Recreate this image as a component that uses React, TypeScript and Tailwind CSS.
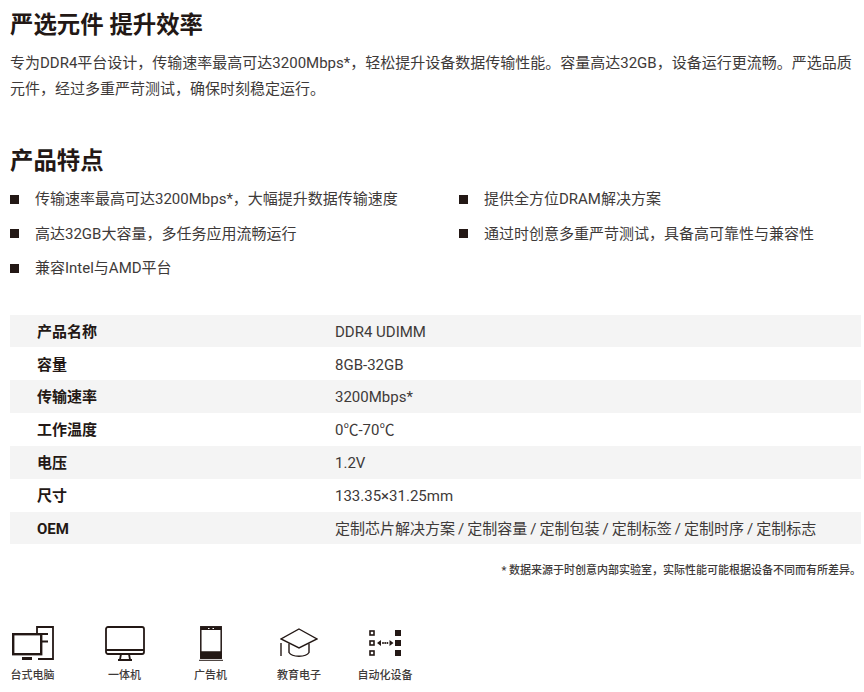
import type { ReactNode } from "react";

const specs = [
  ["产品名称", "DDR4 UDIMM"],
  ["容量", "8GB-32GB"],
  ["传输速率", "3200Mbps*"],
  ["工作温度", "0℃-70℃"],
  ["电压", "1.2V"],
  ["尺寸", "133.35×31.25mm"],
  ["OEM", "定制芯片解决方案 / 定制容量 / 定制包装 / 定制标签 / 定制时序 / 定制标志"],
];

function Feature({ children }: { children: ReactNode }) {
  return (
    <li className="flex h-[34.500px] items-center">
      <span className="mr-[16px] h-[9px] w-[9px] shrink-0 bg-[#231815]" />
      <span>{children}</span>
    </li>
  );
}

function Desktop() {
  return (
    <svg width="42" height="34" viewBox="0 0 42 34" fill="none" stroke="#231815" strokeWidth="1.800">
      <path d="M25 7V1h16v32H26" />
      <path d="M28 8h8M28 15.500h8" />
      <rect x="1.200" y="8.200" width="28" height="20" strokeWidth="2.400" />
      <path d="M10 32.500h10" strokeWidth="3" />
    </svg>
  );
}

function AllInOne() {
  return (
    <svg width="40" height="35" viewBox="0 0 40 35" fill="none" stroke="#231815" strokeWidth="1.800">
      <rect x="1" y="1" width="38" height="27" rx="2" />
      <path d="M1 24h38" />
      <path d="M16 28l-1 5.500M24 28l1 5.500M13 34h14" />
    </svg>
  );
}

function Signage() {
  return (
    <svg width="24" height="35" viewBox="0 0 24 35" fill="none" stroke="#231815" strokeWidth="1.500">
      <rect x="1.800" y="0.800" width="20.400" height="31.400" />
      <path d="M2 2.500h20" strokeWidth="3" />
      <rect x="2" y="26" width="20" height="6" fill="#231815" />
      <path d="M0 34.300h24" strokeWidth="1" />
      <path d="M9 2.500h1.500M13.500 2.500h1.500" stroke="#ffffff" strokeWidth="1" />
    </svg>
  );
}

function Education() {
  return (
    <svg width="38" height="30" viewBox="0 0 38 30" fill="none" stroke="#231815" strokeWidth="1.400">
      <path d="M19 1L37 11 19 20 1 11z" />
      <path d="M9 15.500v9c3 5 17 5 20 0v-9" />
      <path d="M1 15v13" />
    </svg>
  );
}

function Automation() {
  return (
    <svg width="32" height="26" viewBox="0 0 32 26" fill="none" stroke="#231815" strokeWidth="1.600">
      <rect x="1" y="1" width="4" height="4" />
      <rect x="1" y="11" width="4" height="4" />
      <rect x="1" y="21" width="4" height="4" />
      <g fill="#231815" stroke="none">
        <rect x="26" y="0" width="6" height="6" />
        <rect x="26" y="10" width="6" height="6" />
        <rect x="26" y="20" width="6" height="6" />
        <path d="M8 13l4-3v6zM24.500 13l-4-3v6z" />
        <circle cx="14" cy="13" r="1" />
        <circle cx="16.200" cy="13" r="1" />
        <circle cx="18.400" cy="13" r="1" />
      </g>
    </svg>
  );
}

const apps = [
  { label: "台式电脑", icon: <Desktop />, box: "w-[45px]" },
  { label: "一体机", icon: <AllInOne />, box: "ml-[39.500px] w-[60px]" },
  { label: "广告机", icon: <Signage />, box: "ml-[26px] w-[60px]" },
  { label: "教育电子", icon: <Education />, box: "ml-[28.500px] w-[60px]" },
  { label: "自动化设备", icon: <Automation />, box: "ml-[26px] w-[60px]" },
];

export default function App() {
  return (
    <div className="h-[692px] w-[864px] overflow-hidden bg-white pl-[10px] pr-[3px] font-['Roboto','Noto_Sans_CJK_SC',sans-serif] text-[15px] text-[#3e3a39]">
      <h2 className="h-[49px] text-[23.400px] leading-[50px] font-bold text-[#231815]">严选元件 提升效率</h2>
      <p className="mt-[1px] h-[85px] leading-[26px]">
        专为DDR4平台设计，传输速率最高可达3200Mbps*，轻松提升设备数据传输性能。容量高达32GB，设备运行更流畅。严选品质元件，经过多重严苛测试，确保时刻稳定运行。
      </p>
      <h2 className="h-[47px] text-[23.400px] leading-[52px] font-bold text-[#231815]">产品特点</h2>
      <div className="flex">
        <ul className="w-[449px]">
          <Feature>传输速率最高可达3200Mbps*，大幅提升数据传输速度</Feature>
          <Feature>高达32GB大容量，多任务应用流畅运行</Feature>
          <Feature>兼容Intel与AMD平台</Feature>
        </ul>
        <ul>
          <Feature>提供全方位DRAM解决方案</Feature>
          <Feature>通过时创意多重严苛测试，具备高可靠性与兼容性</Feature>
        </ul>
      </div>
      <div className="mt-[29px]">
        {specs.map(([name, value], i) => (
          <div key={name} className={`flex h-[32.850px] items-center pt-[2px] ${i % 2 === 0 ? "bg-[#f4f4f4]" : "bg-white"}`}>
            <span className="w-[325px] pl-[27px] font-bold text-[#231815]">{name}</span>
            <span className={name === "OEM" ? "[word-spacing:-0.7px]" : ""}>{value}</span>
          </div>
        ))}
      </div>
      <p className="mt-[19px] text-right text-[11px] leading-[16px] font-medium">
        * 数据来源于时创意内部实验室，实际性能可能根据设备不同而有所差异。
      </p>
      <div className="mt-[46px] flex">
        {apps.map((app) => (
          <div key={app.label} className={`flex ${app.box} shrink-0 flex-col items-center`}>
            <div className="flex h-[36px] items-center">{app.icon}</div>
            <span className="mt-[7px] whitespace-nowrap text-[11px] leading-[16px] font-medium">{app.label}</span>
          </div>
        ))}
      </div>
    </div>
  );
}
